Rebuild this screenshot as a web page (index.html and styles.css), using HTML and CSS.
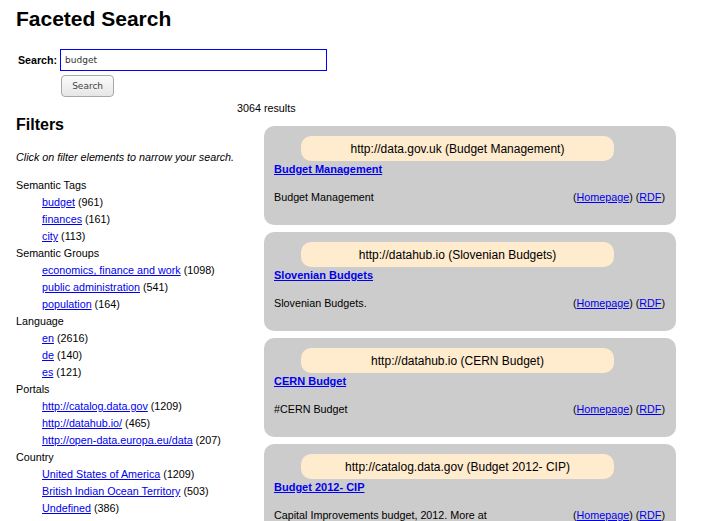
FILE: index.html
```html
<!DOCTYPE html>
<html>
<head>
<meta charset="utf-8">
<title>Faceted Search</title>
<link rel="stylesheet" href="styles.css">
</head>
<body>
<div class="page">
  <h1 class="title">Faceted Search</h1>
  <form class="search-form">
    <label class="search-label" for="q">Search:</label>
    <input class="search-input" id="q" type="text" value="budget">
    <button class="search-button" type="button">Search</button>
  </form>
  <div class="count">3064 results</div>
  <div class="main">
    <aside class="filters">
      <h2 class="filters-title">Filters</h2>
      <p class="hint">Click on filter elements to narrow your search.</p>
      <ul class="facets">
        <li class="facet">Semantic Tags
          <ul class="facet-values">
            <li><a href="#">budget</a> (961)</li>
            <li><a href="#">finances</a> (161)</li>
            <li><a href="#">city</a> (113)</li>
          </ul>
        </li>
        <li class="facet">Semantic Groups
          <ul class="facet-values">
            <li><a href="#">economics, finance and work</a> (1098)</li>
            <li><a href="#">public administration</a> (541)</li>
            <li><a href="#">population</a> (164)</li>
          </ul>
        </li>
        <li class="facet">Language
          <ul class="facet-values">
            <li><a href="#">en</a> (2616)</li>
            <li><a href="#">de</a> (140)</li>
            <li><a href="#">es</a> (121)</li>
          </ul>
        </li>
        <li class="facet">Portals
          <ul class="facet-values">
            <li><a href="#">http://catalog.data.gov</a> (1209)</li>
            <li><a href="#">http://datahub.io/</a> (465)</li>
            <li><a href="#">http://open-data.europa.eu/data</a> (207)</li>
          </ul>
        </li>
        <li class="facet">Country
          <ul class="facet-values">
            <li><a href="#">United States of America</a> (1209)</li>
            <li><a href="#">British Indian Ocean Territory</a> (503)</li>
            <li><a href="#">Undefined</a> (386)</li>
          </ul>
        </li>
      </ul>
    </aside>
    <section class="results">
      <div class="card">
        <div class="pill">http://data.gov.uk (Budget Management)</div>
        <a class="card-title" href="#">Budget Management</a>
        <div class="card-row">
          <span class="desc">Budget Management</span>
          <span class="links">(<a href="#">Homepage</a>) (<a href="#">RDF</a>)</span>
        </div>
      </div>
      <div class="card">
        <div class="pill">http://datahub.io (Slovenian Budgets)</div>
        <a class="card-title" href="#">Slovenian Budgets</a>
        <div class="card-row">
          <span class="desc">Slovenian Budgets.</span>
          <span class="links">(<a href="#">Homepage</a>) (<a href="#">RDF</a>)</span>
        </div>
      </div>
      <div class="card">
        <div class="pill">http://datahub.io (CERN Budget)</div>
        <a class="card-title" href="#">CERN Budget</a>
        <div class="card-row">
          <span class="desc">#CERN Budget</span>
          <span class="links">(<a href="#">Homepage</a>) (<a href="#">RDF</a>)</span>
        </div>
      </div>
      <div class="card">
        <div class="pill">http://catalog.data.gov (Budget 2012- CIP)</div>
        <a class="card-title" href="#">Budget 2012- CIP</a>
        <div class="card-row">
          <span class="desc">Capital Improvements budget, 2012. More at</span>
          <span class="links">(<a href="#">Homepage</a>) (<a href="#">RDF</a>)</span>
        </div>
      </div>
    </section>
  </div>
</div>
</body>
</html>
```

FILE: styles.css
```css
html, body {
  margin: 0;
  padding: 0;
  background: #ffffff;
}
body {
  font-family: "Liberation Sans", Arial, sans-serif;
  font-size: 10.75px;
  color: #000;
}
a {
  color: #0000ee;
  text-decoration: underline;
}
.page {
  padding: 0 16px;
}
.title {
  margin: 0;
  padding-top: 7px;
  font-size: 21px;
  line-height: 24px;
  font-weight: bold;
}
.search-form {
  display: grid;
  grid-template-columns: auto 267px;
  justify-content: start;
  align-items: center;
  column-gap: 3px;
  row-gap: 4px;
  margin-top: 18px;
  padding-left: 2px;
}
.search-label {
  font-weight: bold;
  font-size: 10.67px;
}
.search-input {
  box-sizing: border-box;
  width: 267px;
  height: 22px;
  margin: 0;
  padding: 0 4px;
  border: 1px solid #0000ff;
  font-family: "DejaVu Sans", sans-serif;
  font-size: 9px;
  color: #333;
  outline: none;
}
.search-button {
  grid-column: 2;
  justify-self: start;
  box-sizing: border-box;
  width: 53px;
  height: 22px;
  margin: 0 0 0 1px;
  padding: 0;
  border: 1px solid #a8a8a8;
  border-radius: 4px;
  background: linear-gradient(#fbfbfb, #e6e6e6);
  font-family: "DejaVu Sans", sans-serif;
  font-size: 9px;
  color: #444;
}
.count {
  margin-top: 5px;
  padding-left: 221px;
  line-height: 13px;
}
.main {
  display: flex;
  align-items: flex-start;
}
.filters {
  width: 248px;
  flex: none;
}
.filters-title {
  margin: 0;
  padding-top: 1px;
  font-size: 16px;
  line-height: 18px;
  font-weight: bold;
}
.hint {
  margin: 15px 0 11px;
  font-style: italic;
  line-height: 17px;
}
.facets, .facet-values {
  list-style: none;
  margin: 0;
  padding: 0;
}
.facet {
  line-height: 17px;
}
.facet-values {
  padding-left: 26px;
}
.results {
  width: 412px;
  flex: none;
  margin-top: 11px;
  display: flex;
  flex-direction: column;
  gap: 7px;
}
.card {
  box-sizing: border-box;
  height: 99px;
  padding: 10px 11px 10px 10px;
  background: #cccccc;
  border-radius: 10px;
}
.pill {
  box-sizing: border-box;
  width: 313px;
  height: 25px;
  margin-left: 27px;
  padding-top: 2px;
  background: #ffebcd;
  border-radius: 10px;
  font-size: 12px;
  line-height: 23px;
  text-align: center;
}
.card-title {
  display: inline-block;
  margin-top: 1px;
  font-size: 11px;
  font-weight: bold;
  line-height: 14px;
}
.card-row {
  display: flex;
  justify-content: space-between;
  margin-top: 14px;
  line-height: 14px;
}
```
